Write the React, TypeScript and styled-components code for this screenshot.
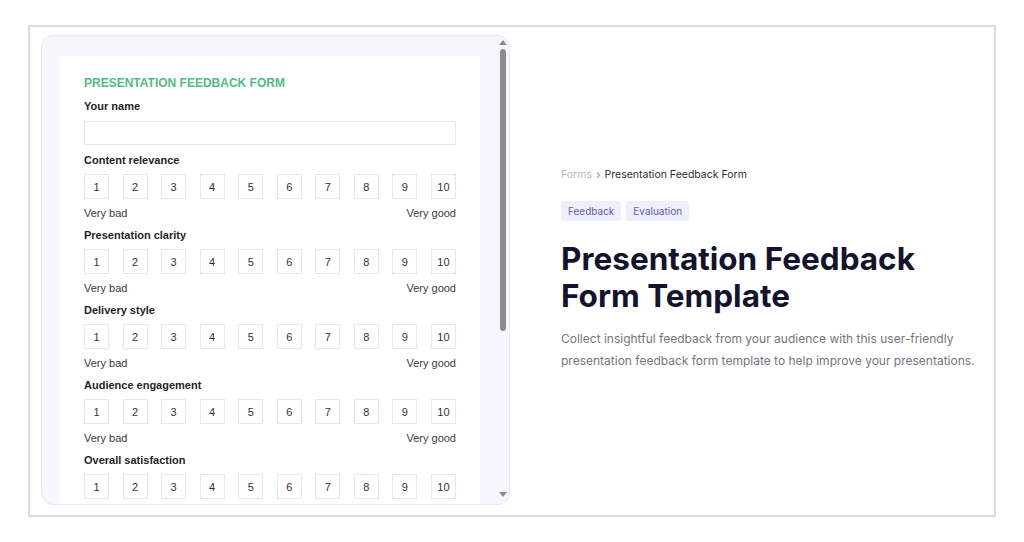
import React from "react";
import styled, {createGlobalStyle} from "styled-components";

const GlobalStyle = createGlobalStyle`
	* {
		box-sizing: border-box;
	}
	body {
		margin: 0;
		background: #ffffff;
		font-family: "Liberation Sans", Arial, sans-serif;
	}
`;

const questions = [
	"Content relevance",
	"Presentation clarity",
	"Delivery style",
	"Audience engagement",
	"Overall satisfaction",
];

const scale = [1, 2, 3, 4, 5, 6, 7, 8, 9, 10];

export default function App() {
	return (
		<Page>
			<GlobalStyle />
			<Frame>
				<Preview>
					<ScrollArea>
						<FormCard>
							<FormTitle>PRESENTATION FEEDBACK FORM</FormTitle>
							<Label>Your name</Label>
							<TextInput />
							{questions.map((q) => (
								<Question key={q}>
									<Label>{q}</Label>
									<Scale>
										{scale.map((n) => (
											<ScaleBox key={n}>{n}</ScaleBox>
										))}
									</Scale>
									<ScaleHints>
										<span>Very bad</span>
										<span>Very good</span>
									</ScaleHints>
								</Question>
							))}
							<Label>Additional comments</Label>
							<TextArea />
							<Submit>Submit</Submit>
						</FormCard>
					</ScrollArea>
					<ScrollTrack>
						<ArrowUp />
						<Thumb />
						<ArrowDown />
					</ScrollTrack>
				</Preview>
				<Info>
					<Breadcrumb>
						<Crumb>Forms</Crumb>
						<Chevron>›</Chevron>
						<Current>Presentation Feedback Form</Current>
					</Breadcrumb>
					<Tags>
						<Tag>Feedback</Tag>
						<Tag>Evaluation</Tag>
					</Tags>
					<Heading>Presentation Feedback Form Template</Heading>
					<Description>
						Collect insightful feedback from your audience with this user-friendly presentation
						feedback form template to help improve your presentations.
					</Description>
				</Info>
			</Frame>
		</Page>
	);
}

const Page = styled.div`
	padding: 25px 28px;
`;

const Frame = styled.div`
	display: flex;
	width: 968px;
	height: 492px;
	border: 2px solid #dcdcdc;
	padding: 8px 6px 10px 11px;
`;

const Preview = styled.div`
	position: relative;
	flex: 0 0 469px;
	height: 470px;
	overflow: hidden;
	background: #f6f6ff;
	border: 1px solid #e6e8fa;
	border-radius: 12px;
`;

const ScrollArea = styled.div`
	height: 100%;
	overflow: hidden;
	padding: 20px 19px 20px 18px;
`;

const ScrollTrack = styled.div`
	position: absolute;
	top: 2px;
	right: 1px;
	bottom: 2px;
	width: 10px;
	display: flex;
	flex-direction: column;
	align-items: center;
`;

const ArrowUp = styled.div`
	width: 0;
	height: 0;
	margin-top: 2px;
	border-left: 4px solid transparent;
	border-right: 4px solid transparent;
	border-bottom: 5px solid #8c8c8c;
`;

const ArrowDown = styled.div`
	width: 0;
	height: 0;
	margin-top: auto;
	margin-bottom: 5px;
	border-left: 4px solid transparent;
	border-right: 4px solid transparent;
	border-top: 5px solid #8c8c8c;
`;

const Thumb = styled.div`
	width: 6px;
	height: 282px;
	margin-top: 4px;
	border-radius: 3px;
	background: #8c8c8c;
`;

const FormCard = styled.div`
	width: 420px;
	background: #ffffff;
	padding: 19px 24px 24px;
`;

const FormTitle = styled.h2`
	margin: 0 0 8px;
	font-size: 12px;
	line-height: 16px;
	font-weight: 700;
	color: #52bc82;
`;

const Label = styled.div`
	font-size: 11px;
	line-height: 14px;
	font-weight: 700;
	color: #1f1f1f;
`;

const TextInput = styled.div`
	height: 24px;
	margin: 8px 0;
	border: 1.5px solid #e4e7f0;
`;

const TextArea = styled.div`
	height: 70px;
	margin: 8px 0 14px;
	border: 1.5px solid #e4e7f0;
`;

const Question = styled.div`
	margin-bottom: 8px;
`;

const Scale = styled.div`
	display: flex;
	justify-content: space-between;
	margin: 7px 0;
`;

const ScaleBox = styled.div`
	width: 25px;
	height: 25px;
	display: flex;
	align-items: center;
	justify-content: center;
	border: 1.5px solid #e4e7f0;
	font-size: 11px;
	color: #333333;
`;

const ScaleHints = styled.div`
	display: flex;
	justify-content: space-between;
	font-size: 11px;
	line-height: 14px;
	color: #3a3a3a;
`;

const Submit = styled.div`
	display: inline-block;
	padding: 7px 18px;
	background: #52bc82;
	color: #ffffff;
	font-size: 12px;
	font-weight: 700;
	border-radius: 3px;
`;

const Info = styled.div`
	flex: 1;
	align-self: center;
	padding-left: 51px;
	font-family: Inter, "Liberation Sans", sans-serif;
`;

const Breadcrumb = styled.div`
	display: flex;
	align-items: center;
	gap: 4px;
	font-size: 10.5px;
	line-height: 14px;
`;

const Crumb = styled.span`
	color: #b9b9c2;
`;

const Chevron = styled.span`
	color: #8a8a94;
	font-size: 12px;
`;

const Current = styled.span`
	color: #2c2c36;
`;

const Tags = styled.div`
	display: flex;
	gap: 5px;
	margin-top: 19px;
`;

const Tag = styled.span`
	height: 20px;
	padding: 0 7px;
	display: flex;
	align-items: center;
	background: #eeeefd;
	border-radius: 4px;
	font-size: 10px;
	color: #5f62a8;
`;

const Heading = styled.h1`
	margin: 19px 0 14px;
	font-size: 31.5px;
	line-height: 37px;
	font-weight: 700;
	color: #14132d;
	max-width: 400px;
`;

const Description = styled.p`
	margin: 0;
	max-width: 425px;
	font-size: 12px;
	line-height: 22px;
	color: #75757d;
`;
